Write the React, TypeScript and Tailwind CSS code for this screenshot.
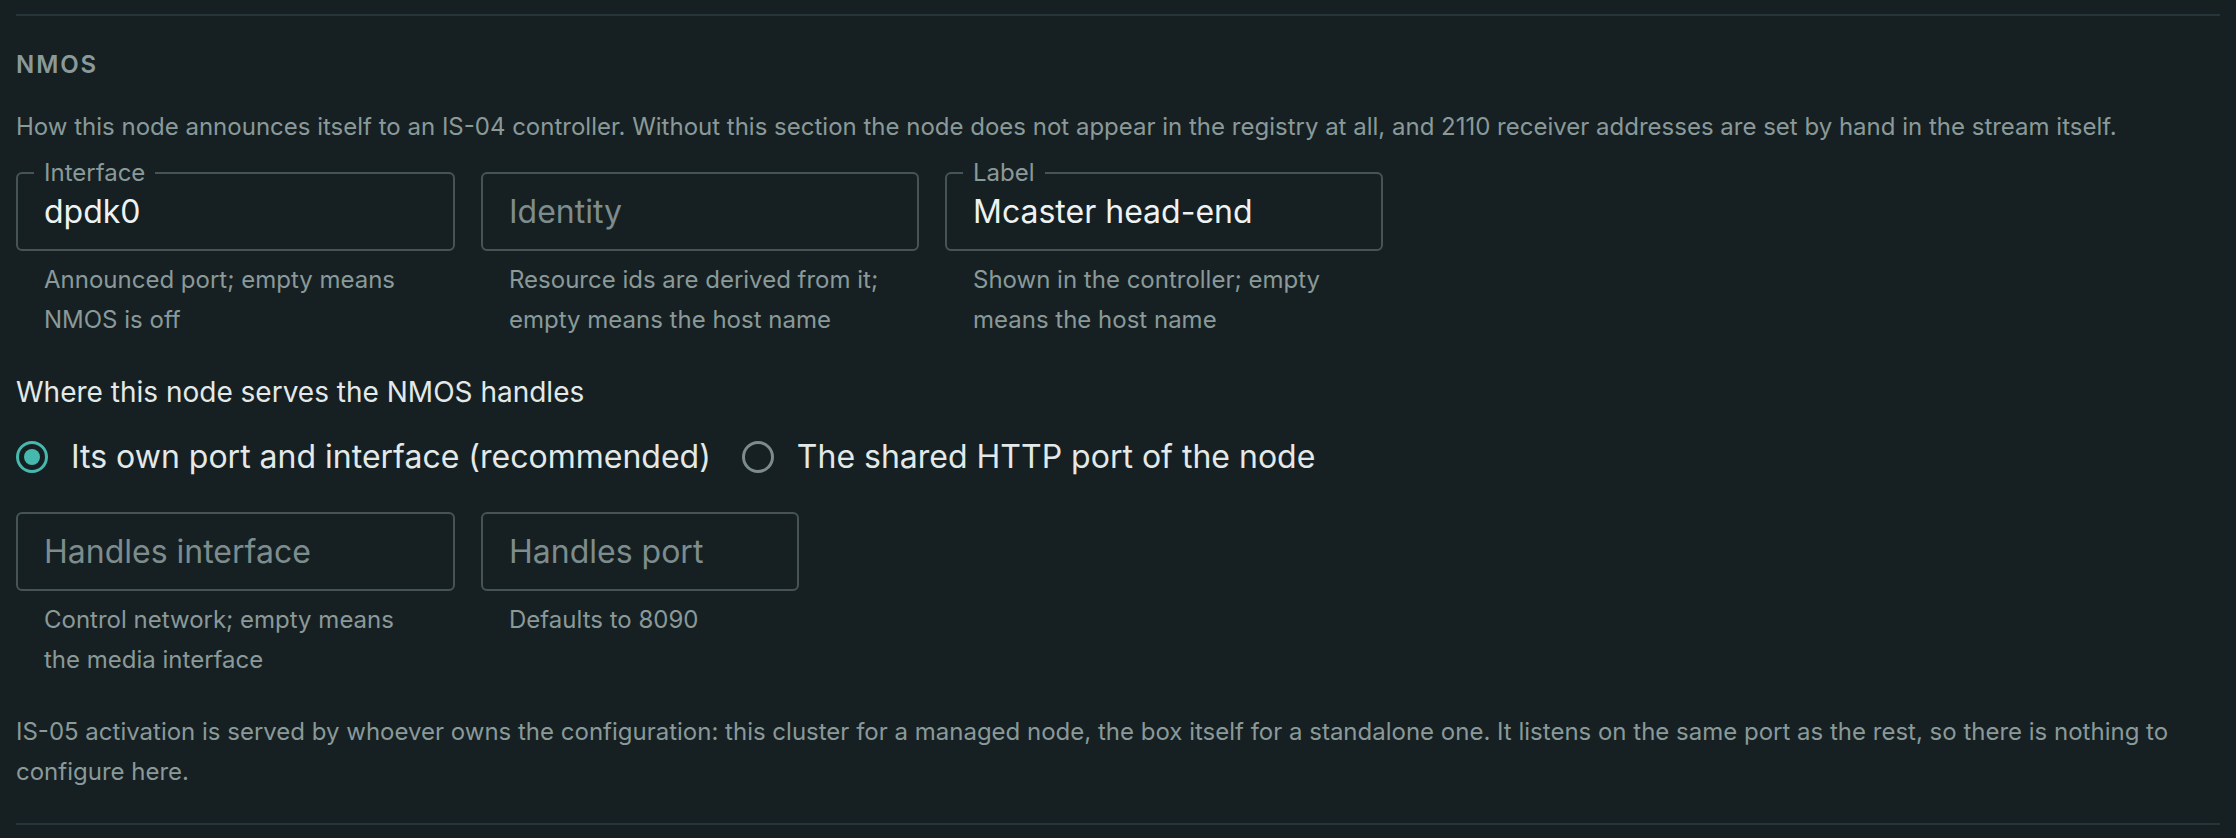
import React from 'react';

type FieldProps = {
    label?: string;
    value?: string;
    placeholder?: string;
    helper: string;
    width: string;
};

const Field = ({ label, value, placeholder, helper, width }: FieldProps) => {
    return (
        <div className={width}>
            <div className="relative flex h-[79px] items-center rounded-[6px] border-2 border-[#465457] px-[26px]">
                {label && (
                    <span className="absolute left-[16px] top-[-1px] -translate-y-1/2 bg-[#162022] px-[10px] text-[24px] leading-none text-[#8a9999]">
                        {label}
                    </span>
                )}
                {value ? (
                    <span className="text-[32px] text-[#eef2f2]">{value}</span>
                ) : (
                    <span className="text-[32px] text-[#7d8c8c]">{placeholder}</span>
                )}
            </div>
            <p className="mt-[9px] px-[28px] text-[24px] leading-[40px] text-[#8a9999]">{helper}</p>
        </div>
    );
};

const Radio = ({ checked, label }: { checked?: boolean; label: string }) => {
    return (
        <label className="flex items-center gap-[23px]">
            {checked ? (
                <span className="flex h-[32px] w-[32px] items-center justify-center rounded-full border-[3px] border-[#46b8ad]">
                    <span className="h-[16px] w-[16px] rounded-full bg-[#46b8ad]" />
                </span>
            ) : (
                <span className="h-[32px] w-[32px] rounded-full border-[3px] border-[#7c8b8b]" />
            )}
            <span className="text-[32px] text-[#e3e9e9]">{label}</span>
        </label>
    );
};

export default function App() {
    return (
        <div className="min-h-screen bg-[#162022] px-[16px] pt-[14px] font-['Inter',sans-serif]">
            <div className="h-[2px] bg-[#25353a]" />

            {/* NMOS section */}
            <h3 className="mt-[33px] text-[24px] font-semibold leading-[32px] tracking-[0.08em] text-[#8a9a9a]">
                NMOS
            </h3>
            <p className="mt-[28px] text-[24px] leading-[36px] text-[#8a9999]">
                How this node announces itself to an IS-04 controller. Without this section the node does not appear in the registry at all, and 2110 receiver addresses are set by hand in the stream itself.
            </p>

            <div className="mt-[27px] flex gap-[26px]">
                <Field width="w-[439px]" label="Interface" value="dpdk0" helper="Announced port; empty means NMOS is off" />
                <Field width="w-[438px]" placeholder="Identity" helper="Resource ids are derived from it; empty means the host name" />
                <Field width="w-[438px]" label="Label" value="Mcaster head-end" helper="Shown in the controller; empty means the host name" />
            </div>

            <p className="mt-[34px] text-[28px] leading-[36px] text-[#e3e9e9]">Where this node serves the NMOS handles</p>

            <div className="mt-[23px] flex h-[48px] items-center gap-[31px]">
                <Radio checked label="Its own port and interface (recommended)" />
                <Radio label="The shared HTTP port of the node" />
            </div>

            <div className="mt-[31px] flex gap-[26px]">
                <Field width="w-[439px]" placeholder="Handles interface" helper="Control network; empty means the media interface" />
                <Field width="w-[318px]" placeholder="Handles port" helper="Defaults to 8090" />
            </div>

            <p className="mt-[32px] text-[24px] leading-[40px] text-[#8a9999]">
                IS-05 activation is served by whoever owns the configuration: this cluster for a managed node, the box itself for a standalone one. It listens on the same port as the rest, so there is nothing to configure here.
            </p>

            <div className="mt-[31px] h-[2px] bg-[#25353a]" />
        </div>
    );
}
